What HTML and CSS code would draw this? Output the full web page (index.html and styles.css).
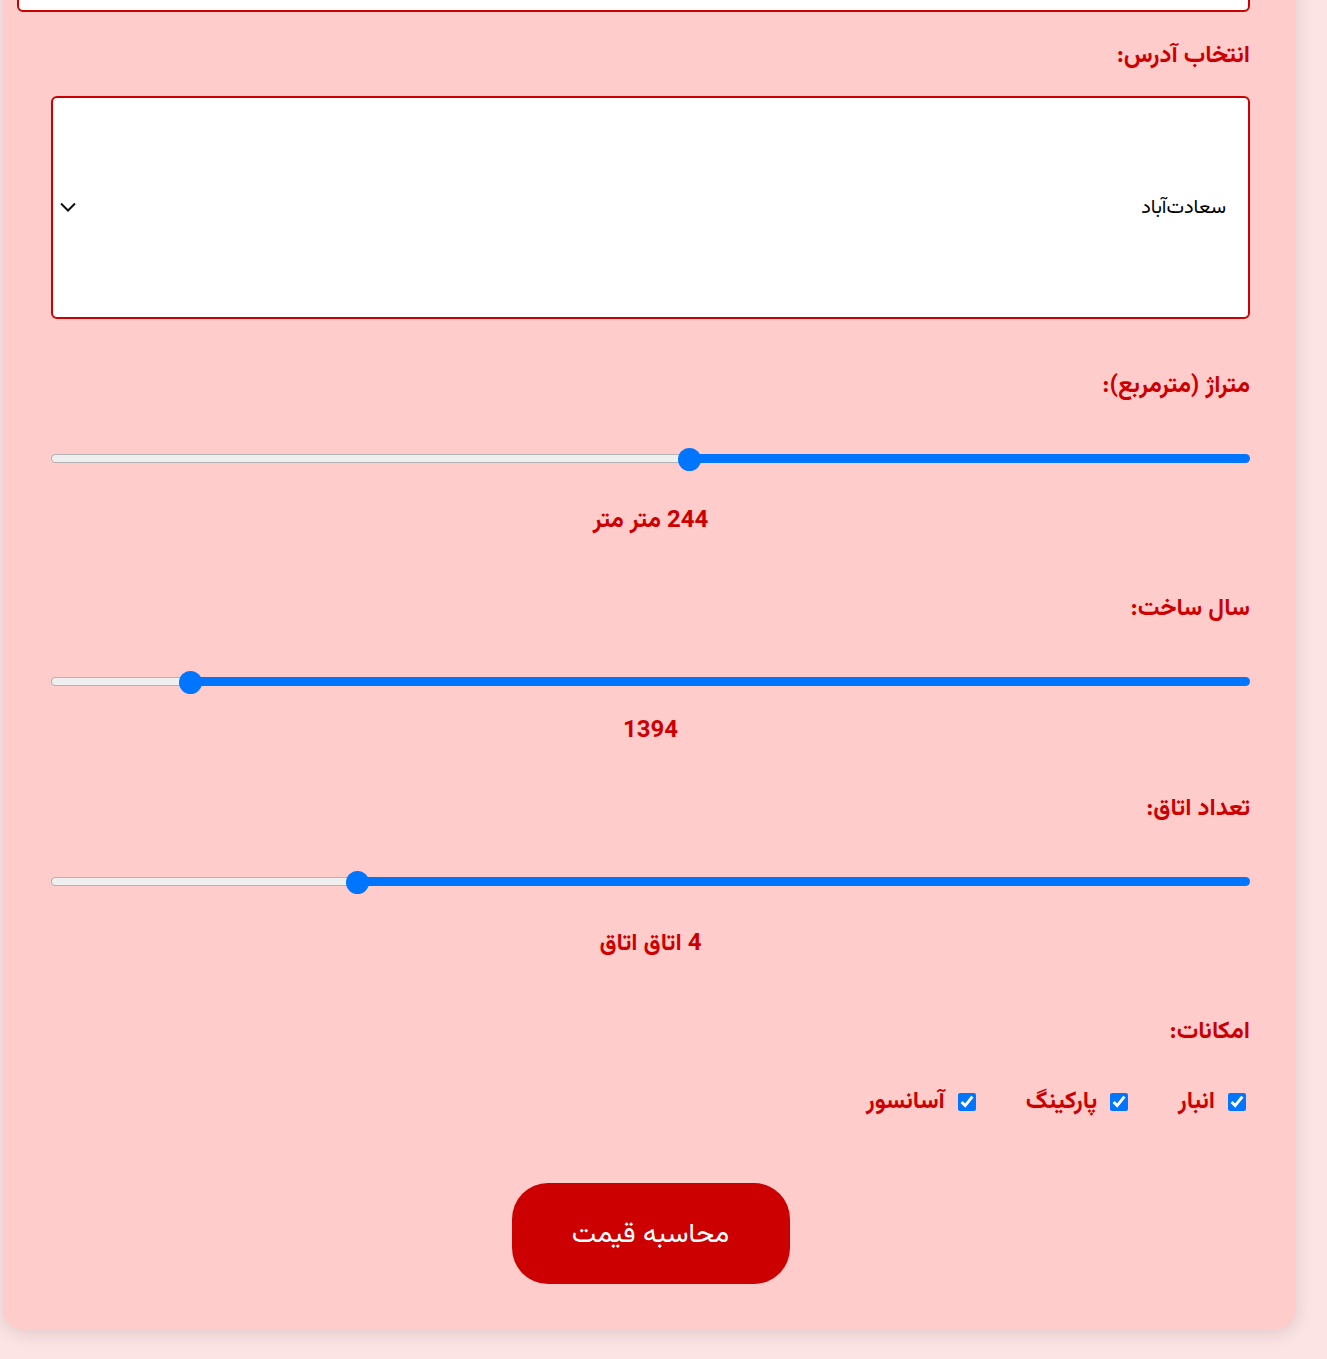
FILE: index.html
```html
<!DOCTYPE html>
<html lang="fa" dir="rtl">
<head>
<meta charset="utf-8">
<title>محاسبه قیمت</title>
<link rel="stylesheet" href="styles.css">
</head>
<body>
<div class="page">
  <form class="card">
    <div class="group group-first">
      <input class="text-input" type="text">
    </div>

    <div class="group">
      <label class="label label-select">انتخاب آدرس:</label>
      <div class="select-wrap">
        <select class="select">
          <option>سعادت‌آباد</option>
        </select>
        <svg class="chevron" width="16" height="10" viewBox="0 0 16 10"><path d="M1 1.5 L8 8.5 L15 1.5" fill="none" stroke="#111" stroke-width="2"/></svg>
      </div>
    </div>

    <div class="group">
      <label class="label label-range">متراژ (مترمربع):</label>
      <input class="range" type="range" min="20" max="500" value="244" style="--p:46.75%">
      <div class="value">244 متر متر</div>
    </div>

    <div class="group">
      <label class="label label-range">سال ساخت:</label>
      <input class="range" type="range" min="1320" max="1403" value="1394" style="--p:88.4%">
      <div class="value value-year">1394</div>
    </div>

    <div class="group">
      <label class="label label-range">تعداد اتاق:</label>
      <input class="range" type="range" min="1" max="5" value="4" style="--p:74.5%">
      <div class="value">4 اتاق اتاق</div>
    </div>

    <div class="group">
      <label class="label label-features">امکانات:</label>
      <div class="features">
        <label class="feature"><input class="check" type="checkbox" checked><span>انبار</span></label>
        <label class="feature"><input class="check" type="checkbox" checked><span>پارکینگ</span></label>
        <label class="feature"><input class="check" type="checkbox" checked><span>آسانسور</span></label>
      </div>
    </div>

    <div class="actions">
      <button class="submit" type="button">محاسبه قیمت</button>
    </div>
  </form>
</div>
</body>
</html>
```
FILE: styles.css
```css
html, body {
  margin: 0;
  padding: 0;
}
body {
  background: #fde4e4;
  font-family: Vazirmatn, "Noto Sans", sans-serif;
  color: #cc0000;
  overflow: hidden;
}
.page {
  padding: 0 31px 30px 3px;
}
.card {
  background: #ffcccc;
  margin-top: -40px;
  padding: 0 46px 45px 48px;
  border-radius: 0 0 20px 20px;
  box-shadow: 0 4px 18px rgba(0, 0, 0, 0.12);
  display: flex;
  flex-direction: column;
}
.group {
  display: flex;
  flex-direction: column;
}
.group-first {
  margin-bottom: 24px;
}
.text-input {
  box-sizing: content-box;
  width: 100%;
  height: 18px;
  padding: 15px;
  border: 2px solid #cc0000;
  border-radius: 6px;
  background: #fff;
  font-size: 16px;
}
.label {
  display: block;
  font-weight: bold;
  font-size: 24px;
  line-height: 36px;
  padding-top: 2px;
}
.label-select {
  margin-bottom: 22px;
}
.select-wrap {
  position: relative;
}
.select {
  appearance: none;
  -webkit-appearance: none;
  box-sizing: border-box;
  width: 100%;
  height: 223px;
  border: 2px solid #cc0000;
  border-radius: 6px;
  background: #fff;
  padding: 0 22px;
  font-family: Vazirmatn, "Noto Sans", sans-serif;
  font-size: 20px;
  color: #000;
  margin: 0 0 47px 0;
}
.chevron {
  position: absolute;
  left: 9px;
  top: 106px;
}
.label-range {
  margin-bottom: 43px;
}
.range {
  -webkit-appearance: none;
  appearance: none;
  width: 100%;
  height: 23px;
  margin: 0;
  background: transparent;
}
.range::-webkit-slider-runnable-track {
  height: 9px;
  border: 1px solid transparent;
  border-radius: 6px;
  background:
    linear-gradient(to left, #0075ff var(--p), transparent var(--p)) border-box,
    linear-gradient(#efefef, #efefef) padding-box,
    linear-gradient(#b3b3b3, #b3b3b3) border-box;
  background-origin: border-box;
}
.range::-webkit-slider-thumb {
  -webkit-appearance: none;
  appearance: none;
  width: 23px;
  height: 23px;
  border-radius: 50%;
  background: #0075ff;
  border: none;
  margin-top: -7px;
}
.value {
  text-align: center;
  font-weight: bold;
  font-size: 24px;
  line-height: 36px;
  padding-top: 2px;
  margin-top: 31px;
  margin-bottom: 50px;
}
.value-year {
  margin-top: 18px;
  margin-bottom: 40px;
}
.label-features {
  margin-bottom: 34px;
}
.features {
  display: flex;
  gap: 50px;
  padding-right: 4px;
}
.feature {
  display: flex;
  align-items: center;
  gap: 13px;
  font-size: 24px;
  font-weight: bold;
  line-height: 36px;
}
.check {
  width: 18px;
  height: 18px;
  margin: 0;
  accent-color: #0075ff;
}
.actions {
  display: flex;
  justify-content: center;
  margin-top: 63px;
}
.submit {
  width: 278px;
  height: 101px;
  border: none;
  border-radius: 36px;
  background: #cc0000;
  color: #fff;
  font-family: Vazirmatn, "Noto Sans", sans-serif;
  font-size: 27.5px;
  padding: 3px 0 0;
}
```
